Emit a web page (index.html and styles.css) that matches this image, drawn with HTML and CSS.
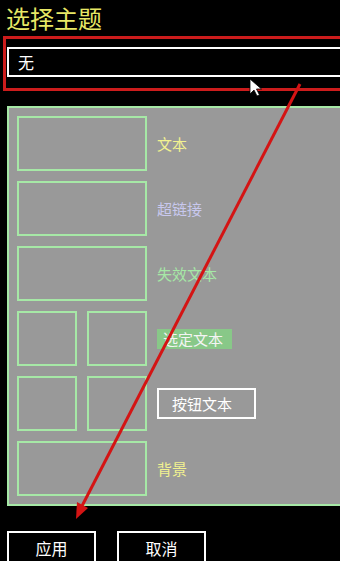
FILE: index.html
```html
<!DOCTYPE html>
<html lang="zh">
<head>
<meta charset="utf-8">
<title>选择主题</title>
<link rel="stylesheet" href="styles.css">
</head>
<body>
<div class="page">
  <h1 class="title">选择主题</h1>
  <div class="highlight">
    <div class="input">无</div>
  </div>
  <div class="panel">
    <div class="row">
      <div class="swatch"></div>
      <span class="label c-text">文本</span>
    </div>
    <div class="row">
      <div class="swatch"></div>
      <span class="label c-link">超链接</span>
    </div>
    <div class="row">
      <div class="swatch"></div>
      <span class="label c-disabled">失效文本</span>
    </div>
    <div class="row">
      <div class="pair"><div class="swatch half"></div><div class="swatch half"></div></div>
      <span class="label selected">选定文本</span>
    </div>
    <div class="row">
      <div class="pair"><div class="swatch half"></div><div class="swatch half"></div></div>
      <span class="label btntext">按钮文本</span>
    </div>
    <div class="row">
      <div class="swatch"></div>
      <span class="label c-bg">背景</span>
    </div>
  </div>
  <div class="buttons">
    <div class="btn">应用</div>
    <div class="btn">取消</div>
  </div>
  <svg class="overlay" width="340" height="561" viewBox="0 0 340 561">
    <line x1="300" y1="84" x2="82" y2="506" stroke="#d41414" stroke-width="3"/>
    <polygon points="76,519 88,508 77,502" fill="#d41414"/>
    <path d="M250 79 L250 94 L254 90 L257 96 L259.5 95 L256.5 89 L261.5 89 Z" fill="#ffffff" stroke="#000000" stroke-width="0.8"/>
  </svg>
</div>
</body>
</html>
```
FILE: styles.css
```css
html, body {
  margin: 0;
  padding: 0;
  background: #000;
}
body {
  font-family: "Noto Sans CJK SC", "Noto Sans", sans-serif;
}
.page {
  position: relative;
  width: 340px;
  height: 561px;
  overflow: hidden;
  background: #000;
  display: flex;
  flex-direction: column;
}
.title {
  margin: 0 0 1px 0;
  padding-left: 6px;
  font-size: 24px;
  font-weight: normal;
  line-height: 35px;
  color: #e8e866;
}
.highlight {
  margin-left: 3px;
  margin-right: -30px;
  border: 3px solid #cc1c1c;
  padding: 8px 0 11px 1px;
}
.input {
  border: 2px solid #ffffff;
  height: 26px;
  line-height: 26px;
  padding-left: 9px;
  color: #ffffff;
  font-size: 16px;
}
.panel {
  margin: 15px -30px 0 7px;
  border: 2px solid #a6e8a6;
  background: #999999;
  padding: 8px;
  display: flex;
  flex-direction: column;
  gap: 10px;
}
.row {
  display: flex;
  align-items: center;
  gap: 10px;
  height: 55px;
}
.swatch {
  box-sizing: border-box;
  width: 130px;
  height: 55px;
  border: 2px solid #a6e8a6;
}
.pair {
  display: flex;
  gap: 10px;
}
.swatch.half {
  width: 60px;
}
.label {
  font-size: 15px;
  line-height: 22px;
}
.c-text { color: #f2f290; }
.c-link { color: #c8c8ee; }
.c-disabled { color: #a6e8a6; }
.c-bg { color: #f2f290; }
.selected {
  background: #88c888;
  color: #f4f4f4;
  padding: 0 9px 0 6px;
  height: 20px;
  line-height: 20px;
}
.btntext {
  box-sizing: border-box;
  width: 99px;
  height: 31px;
  line-height: 27px;
  border: 2px solid #ffffff;
  color: #ffffff;
  padding-left: 13px;
}
.buttons {
  margin: 25px 0 0 7px;
  display: flex;
  gap: 21px;
}
.btn {
  box-sizing: border-box;
  width: 89px;
  height: 34px;
  border: 2px solid #ffffff;
  color: #ffffff;
  font-size: 16px;
  line-height: 30px;
  text-align: center;
}
.overlay {
  position: absolute;
  left: 0;
  top: 0;
  pointer-events: none;
}
```
